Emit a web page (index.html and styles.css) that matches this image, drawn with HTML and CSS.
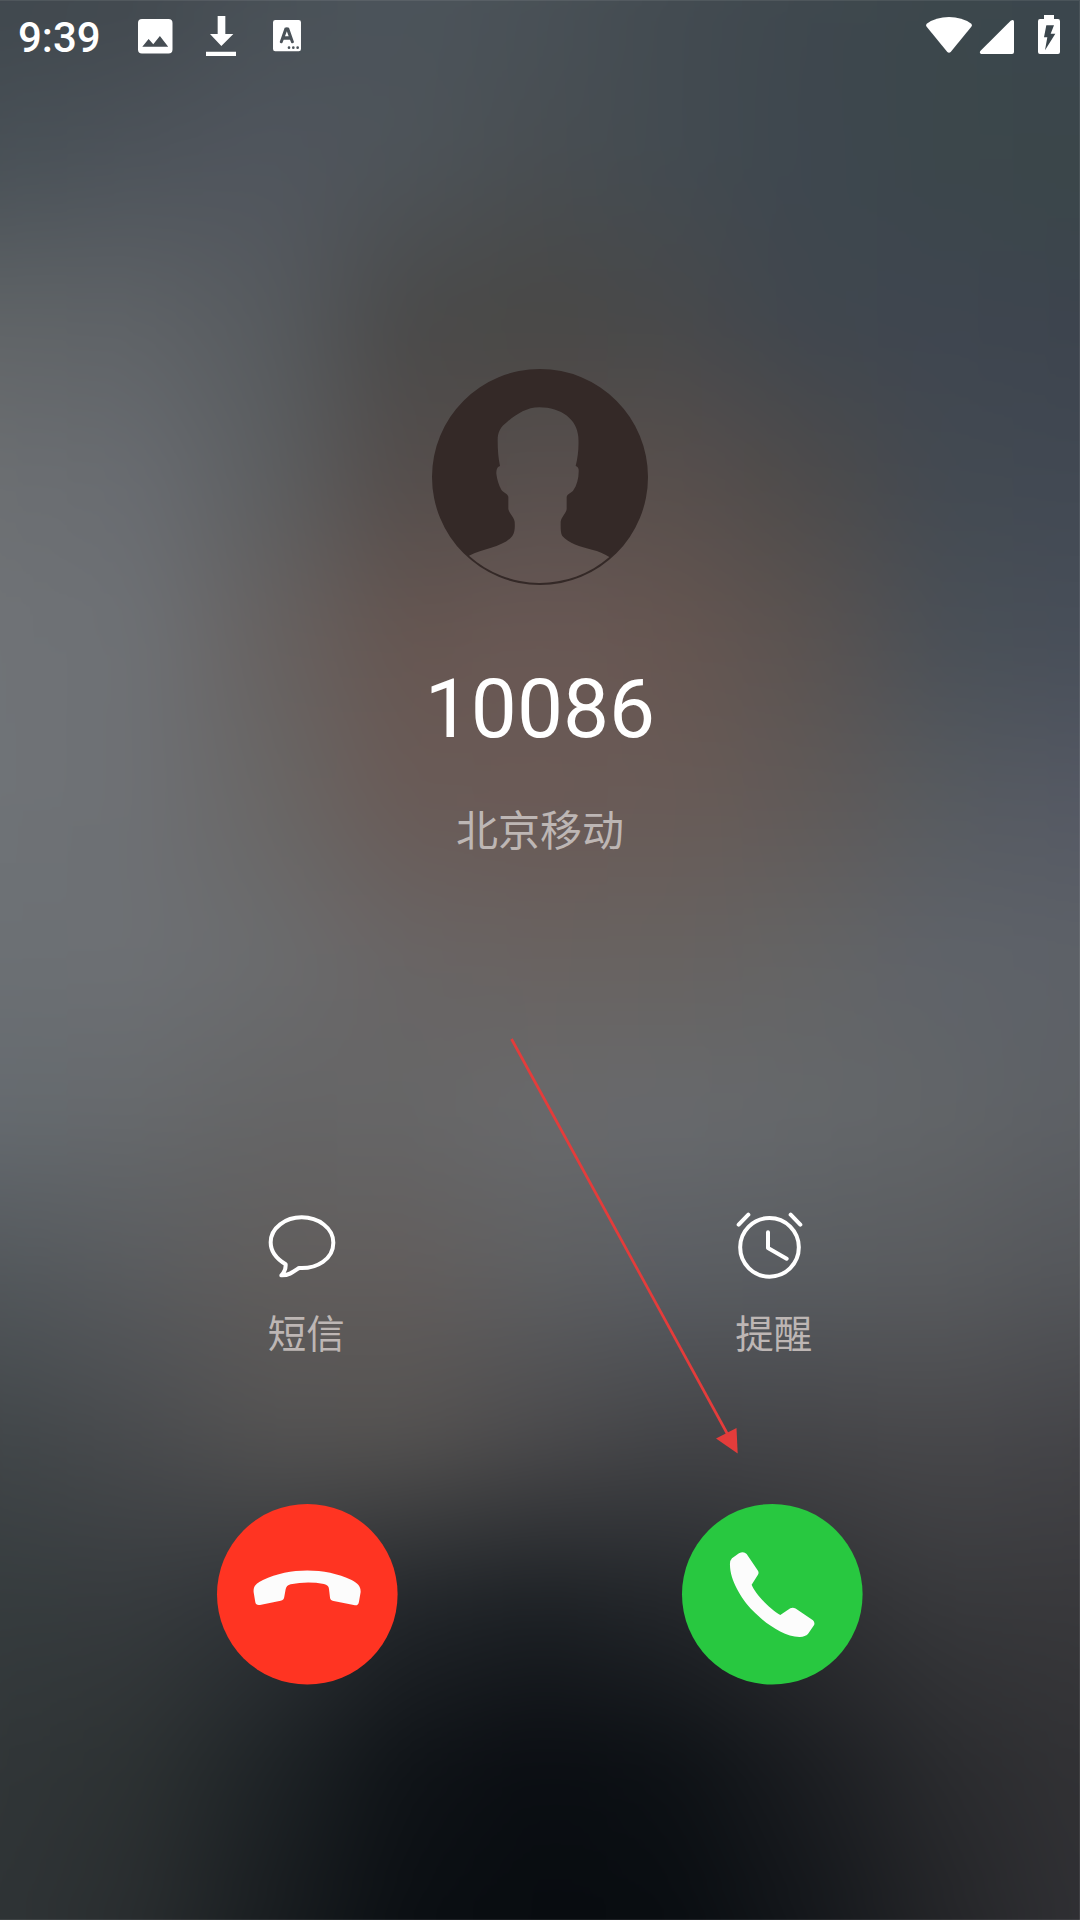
FILE: index.html
```html
<!DOCTYPE html>
<html lang="zh-CN">
<head>
<meta charset="utf-8">
<title>来电</title>
<link rel="stylesheet" href="styles.css">
</head>
<body>
<main class="screen">
  <div class="wallpaper">
    <i class="band b0"></i><i class="band b1"></i><i class="band b2"></i><i class="band b3"></i><i class="band b4"></i><i class="band b5"></i><i class="band b6"></i><i class="band b7"></i><i class="band b8"></i><i class="band b9"></i><i class="band b10"></i><i class="band b11"></i><i class="band b12"></i>
  </div>

  <header class="status">
    <span class="time">9:39</span>
    <svg class="ic-photo" viewBox="0 0 104 104"><path fill-rule="evenodd" d="M12 0H92Q104 0 104 12V92Q104 104 92 104H12Q0 104 0 92V12Q0 0 12 0ZM13 84H91L66 51L46 76L32 60Z"/></svg>
    <svg class="ic-down" viewBox="0 0 90 120"><path d="M35 0H58V54H82L46 90L12 54H35ZM0 107H90V120H0Z"/></svg>
    <svg class="ic-lang" viewBox="0 0 84 94"><path fill-rule="evenodd" d="M7 0H77Q84 0 84 7V87Q84 94 77 94H7Q0 94 0 87V7Q0 0 7 0ZM35 23L20 66Q22 71 28 69L32 59H51L55 69Q61 71 63 66L48 23Q42 20 35 23ZM41.500 34L47 49H36Z"/><g class="dots"><circle cx="48" cy="83" r="4"/><circle cx="61" cy="83" r="4"/><circle cx="74" cy="83" r="4"/></g></svg>
    <span class="spacer"></span>
    <svg class="ic-wifi" viewBox="0 0 138 108"><path d="M2 20Q30 0 69 0T136 20Q140 24 136 29L74 105Q69 110 64 105L2 29Q-2 24 2 20Z"/></svg>
    <svg class="ic-signal" viewBox="0 0 102 102"><path d="M92 2Q102-3 102 5V96Q102 102 96 102H4Q-3 100 1 93Z"/></svg>
    <svg class="ic-battery" viewBox="0 0 66 117"><path fill-rule="evenodd" d="M18 0H48V12H60Q66 12 66 19V111Q66 117 60 117H6Q0 117 0 111V19Q0 12 6 12H18ZM25 31H48L38 56H52L21 106L28 67H18Z"/></svg>
  </header>

  <section class="caller">
    <svg class="avatar" viewBox="36 26 648 648">
      <path fill-rule="evenodd" d="M360 26A324 324 0 1 1 360 674A324 324 0 1 1 360 26ZM147 586A318 318 0 0 0 568 590C552 579 536 573 516 568C480 559 446 549 427 527C421 517 422 500 422 484C424 470 439 458 440 446V411C441 400 455 399 460 390C471 374 477 352 476 328C475 321 472 319 467 317C474 290 477 260 475 230C472 178 424 141 358 141C320 141 291 161 262 184C242 199 233 214 233 240C233 270 235 294 240 317C231 320 229 328 229 340C231 357 236 373 244 388C249 397 262 398 265 409V446C267 459 281 468 284 484C285 500 285 516 277 527C251 560 192 563 147 586Z"/>
    </svg>
    <h1 class="number">10086</h1>
    <p class="place">北京移动</p>
  </section>

  <section class="grid options">
    <div class="option">
      <svg class="ic-option" viewBox="83 65 210 204"><path d="M184 81C234 81 279 113 279 157C279 206 230 236 176 233C160 244 146 256 123 255Q137 241 136 222C109 206 91 185 91 156C91 112 136 81 184 81Z"/></svg>
      <span>短信</span>
    </div>
    <div class="option">
      <svg class="ic-option" viewBox="75 66 210 204"><circle cx="178.500" cy="172" r="88"/><path d="M174 127V174L230 206M86 104L115 74M242 74L271 104"/></svg>
      <span>提醒</span>
    </div>
  </section>

  <section class="grid answers">
    <svg class="call" viewBox="37 42 542 542"><circle class="red" cx="308" cy="313" r="271"/><path class="phone" d="M147 307C145 289 155 279 175 270C256 232 360 232 441 270C461 280 469 290 468 307L463 336Q461 347 451 346L387 333Q376 331 376 322L373 296Q372 286 358 282Q308 273 258 283Q245 286 243 298L239 320Q238 330 228 332L166 345Q154 347 152 337Z"/></svg>
    <svg class="call" viewBox="37 282 542 542"><circle class="green" cx="308" cy="553" r="271"/><path class="phone" d="M187 445L208 430Q222 422 231 432L265 482Q269 489 264 496L246 524C256 550 302 600 332 615L362 595Q370 591 378 596L430 631Q437 638 433 646L415 672Q407 680 391 681C342 682 283 637 249 602C214 566 181 509 181 465Q180 452 187 445Z"/></svg>
  </section>

  <svg class="pointer" viewBox="505 1035 240 425"><path class="line" d="M511.500 1039L728 1435"/><path class="tip" d="M716 1438.500L736.500 1428L737.700 1453.500Z"/></svg>
</main>
</body>
</html>
```
FILE: styles.css
```css
* { box-sizing: border-box; }
body { margin: 0; background: #303236; font-family: Roboto, "Noto Sans CJK SC", sans-serif; }
.screen { position: relative; width: 1080px; height: 1920px; overflow: hidden; isolation: isolate; display: flex; flex-direction: column; align-items: center; }
.screen::after { content: ""; position: absolute; inset: 0; pointer-events: none; box-shadow: inset -1px 1px 0 rgba(255, 255, 255, .08), inset 0 -1px 0 rgba(255, 255, 255, .08); }
svg { display: block; fill: #fff; flex: none; overflow: visible; }

/* Wallpaper: horizontal colour bands 160px apart, each fading into the one
   beneath it; it bleeds 90px past the screen so the blur stays clean at the edges */
.wallpaper { position: absolute; inset: -90px; z-index: -1; display: grid; filter: blur(32px); }
.band { grid-area: 1 / 1; --s: calc(90px + var(--n) * 160px); -webkit-mask-image: linear-gradient(transparent calc(var(--s) - 160px), #000 var(--s)); mask-image: linear-gradient(transparent calc(var(--s) - 160px), #000 var(--s)); }
.band.b0 { -webkit-mask-image: none; mask-image: none; background: linear-gradient(90deg, #40484e 90px, #42494f, #495157, #4c545b, #495157, #434b51, #3f484e, #3c474c, #3b464e 1170px); }
.b1 { --n: 1; background: linear-gradient(90deg, #495157 90px, #4e545b, #51565e, #4e5459, #494e52, #434b51, #3e474f, #3c474b, #3b474a 1170px); }
.b2 { --n: 2; background: linear-gradient(90deg, #606467 90px, #5f6367, #575b5f, #4a4a4a, #494846, #48494b, #40474f, #3f4650, #3d444e 1170px); }
.b3 { --n: 3; background: linear-gradient(90deg, #6c6f72 90px, #696c71, #5d5f61, #544d4b, #584f4d, #584f4c, #4d4b4b, #434a52, #424953 1170px); }
.b4 { --n: 4; background: linear-gradient(90deg, #707377 90px, #6e7175, #676261, #665651, #6a5955, #665651, #5a5351, #4a5057, #484f59 1170px); }
.b5 { --n: 5; background: linear-gradient(90deg, #6f7377 90px, #6e7074, #696766, #6a5b57, #6a5a56, #695b57, #605a58, #575b60, #555964 1170px); }
.b6 { --n: 6; background: linear-gradient(90deg, #6c7074 90px, #6d7074, #6b6c6e, #696565, #696361, #676361, #646465, #5f636a, #5e6268 1170px); }
.b7 { --n: 7; background: linear-gradient(90deg, #656a6f 90px, #66696c, #656566, #666667, #696a6c, #686a6d, #65686b, #626568, #5d6065 1170px); }
.b8 { --n: 8; background: linear-gradient(90deg, #52575b 90px, #595b5e, #605d5c, #625d5c, #5e5f61, #5a5d62, #595c60, #595b5e, #54565a 1170px); }
.b9 { --n: 9; background: linear-gradient(90deg, #414649 90px, #494b4e, #535252, #545251, #4b4a4c, #434447, #454548, #48484b, #444448 1170px); }
.b10 { --n: 10; background: linear-gradient(90deg, #363c3e 90px, #373b3e, #303438, #23272b, #1e2226, #24272b, #2f3033, #38393c, #39393c 1170px); }
.b11 { --n: 11; background: linear-gradient(90deg, #313638 90px, #2d3233, #1f2427, #101418, #0b0e13, #0e1216, #1c1e22, #2b2c2f, #323235 1170px); }
.b12 { --n: 12; background: linear-gradient(90deg, #2f3436 90px, #292d2f, #191d20, #0b0f13, #080c10, #090d11, #14171b, #242528, #303034 1170px); }

.status { width: 100%; height: 72px; padding: 0 20px 0 18px; display: flex; align-items: flex-start; color: #fff; }
.time { width: 119.500px; margin-top: 13px; font-size: 42px; line-height: 50px; font-weight: 500; }
.ic-photo { width: 34.500px; height: 34.500px; margin-top: 19px; }
.ic-down { width: 30px; height: 40px; margin: 16px 0 0 34px; }
.ic-lang { width: 28px; height: 31.300px; margin: 20px 0 0 36.500px; }
.dots { fill: #4d555b; }
.spacer { flex: 1; }
.ic-wifi { width: 46px; height: 36px; margin-top: 17px; }
.ic-signal { width: 34px; height: 34px; margin: 20px 0 0 8px; }
.ic-battery { width: 22px; height: 39px; margin: 15px 0 0 24px; }

.caller { margin-top: 297px; display: flex; flex-direction: column; align-items: center; }
.avatar { width: 216px; height: 216px; fill: #342927; }
.number { margin: 76px 0 0; font-size: 82px; line-height: 96px; font-weight: 400; color: #fff; }
.place { margin: 45px 0 0; font-size: 42px; line-height: 60px; color: #bdb6b4; }

.grid { width: 930px; display: grid; grid-template-columns: 1fr 1fr; justify-items: center; }
.options { width: 935px; margin-top: 350px; color: #bdb6b4; }
.option { display: flex; flex-direction: column; gap: 27px; font-size: 38.500px; line-height: 56px; }
.ic-option { width: 70px; height: 68px; fill: none; stroke: #fff; stroke-width: 12; stroke-linecap: round; stroke-linejoin: round; }
.answers { margin-top: 141px; }
.call { width: 180.600px; height: 180.600px; }
.red { fill: #ff3422; }
.green { fill: #28c840; }
.phone { fill: #fcfcfc; }

.pointer { position: absolute; left: 505px; top: 1035px; width: 240px; height: 425px; }
.line { fill: none; stroke: #e43c3b; stroke-width: 2.700; }
.tip { fill: #e43c3b; }
```
